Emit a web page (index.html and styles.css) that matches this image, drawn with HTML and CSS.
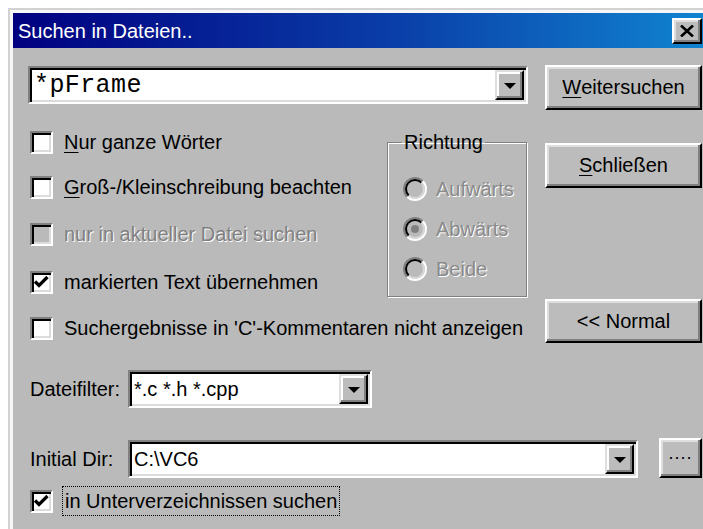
FILE: index.html
```html
<!DOCTYPE html>
<html lang="de">
<head>
<meta charset="utf-8">
<title>Suchen in Dateien..</title>
<link rel="stylesheet" href="styles.css">
</head>
<body>
<div class="window">
  <div class="titlebar">
    <span class="title">Suchen in Dateien..</span>
    <span class="close-btn">
      <svg width="14" height="12" viewBox="0 0 14 12"><path d="M1 0.5 L13 11.5 M13 0.5 L1 11.5" stroke="#000" stroke-width="2.6" fill="none"/></svg>
    </span>
  </div>
  <div class="client">
    <div class="main-grid">
      <div class="combo combo-search">
        <span class="combo-text mono">*pFrame</span>
        <span class="drop-btn"><span class="arrow"></span></span>
      </div>

      <div class="actions">
        <div class="btn btn-find"><u>W</u>eitersuchen</div>
        <div class="btn btn-close"><u>S</u>chließen</div>
        <div class="btn btn-normal">&lt;&lt; Normal</div>
      </div>

      <div class="check-row row-a">
        <span class="box"></span>
        <span class="label"><u>N</u>ur ganze Wörter</span>
      </div>
      <div class="check-row row-b">
        <span class="box"></span>
        <span class="label"><u>G</u>roß-/Kleinschreibung beachten</span>
      </div>
      <div class="check-row row-c disabled">
        <span class="box"></span>
        <span class="label">nur in aktueller Datei suchen</span>
      </div>
      <div class="check-row row-d">
        <span class="box checked"><svg width="19" height="19" viewBox="0 0 19 19"><path d="M3 8.5 L7 12.5 L15.5 4" stroke="#000" stroke-width="3.2" fill="none"/></svg></span>
        <span class="label">markierten Text übernehmen</span>
      </div>
      <div class="check-row row-e">
        <span class="box"></span>
        <span class="label">Suchergebnisse in 'C'-Kommentaren nicht anzeigen</span>
      </div>

      <fieldset class="direction">
        <legend>Richtung</legend>
        <div class="radio-row"><span class="radio"></span><span class="radio-label">Aufwärts</span></div>
        <div class="radio-row"><span class="radio selected"></span><span class="radio-label">Abwärts</span></div>
        <div class="radio-row"><span class="radio"></span><span class="radio-label">Beide</span></div>
      </fieldset>
    </div>

    <div class="field-row filter-row">
      <span class="field-label">Dateifilter:</span>
      <div class="combo combo-filter">
        <span class="combo-text">*.c *.h *.cpp</span>
        <span class="drop-btn"><span class="arrow"></span></span>
      </div>
    </div>

    <div class="field-row dir-row">
      <span class="field-label">Initial Dir:</span>
      <div class="combo combo-dir">
        <span class="combo-text">C:\VC6</span>
        <span class="drop-btn"><span class="arrow"></span></span>
      </div>
      <div class="btn btn-browse">....</div>
    </div>

    <div class="check-row sub-row">
      <span class="box checked"><svg width="19" height="19" viewBox="0 0 19 19"><path d="M3 8.5 L7 12.5 L15.5 4" stroke="#000" stroke-width="3.2" fill="none"/></svg></span>
      <span class="label focus">in Unterverzeichnissen suchen</span>
    </div>
  </div>
</div>
</body>
</html>
```

FILE: styles.css
```css
html, body {
  margin: 0;
  padding: 0;
  background: #ffffff;
  overflow: hidden;
}

body {
  font-family: "Liberation Sans", Arial, sans-serif;
  font-size: 20px;
  color: #000;
}

/* Dialog frame */
.window {
  margin: 8px 0 0 8px;
  width: 698px;
  height: 530px;
  box-sizing: border-box;
  border-top: 2px solid #d2d2d2;
  border-left: 2px solid #d2d2d2;
  padding: 3px 0 0 3px;
  background: #f6f6f6;
  overflow: hidden;
}

.titlebar {
  height: 35px;
  display: flex;
  align-items: center;
  justify-content: space-between;
  padding-left: 5px;
  padding-right: 4px;
  background: linear-gradient(to right, #000080 0%, #0a3ea8 55%, #1084d0 100%);
}

.title {
  color: #fff;
  font-size: 20px;
  line-height: 22px;
}

.close-btn {
  width: 30px;
  height: 26px;
  box-sizing: border-box;
  display: flex;
  align-items: center;
  justify-content: center;
  background: #bcbcbc;
  border: 2px solid;
  border-color: #ffffff #000000 #000000 #ffffff;
  box-shadow: inset -2px -2px #808080, inset 2px 2px #dedede;
}

.client {
  background: #bababa;
  height: 100%;
  padding: 17px 0 0 15px;
  box-sizing: border-box;
}

/* Upper area: search combo, options, direction group, action buttons */
.main-grid {
  display: grid;
  grid-template-columns: 359px 140px 175px;
  grid-template-rows: 54px 46px 45px 48px 49px 43px;
  width: 674px;
}

.combo {
  display: flex;
  align-items: stretch;
  box-sizing: border-box;
  height: 38px;
  padding: 2px;
  background: #fff;
  border: 2px solid;
  border-color: #808080 #ffffff #ffffff #808080;
  box-shadow: inset 2px 2px #000000, inset -2px -2px #dcdcdc;
}

.combo-text {
  flex: 1;
  display: flex;
  align-items: center;
  padding-left: 2px;
  white-space: nowrap;
  overflow: hidden;
}

.mono {
  font-family: "Liberation Mono", "Courier New", monospace;
  font-size: 25px;
  letter-spacing: 0.4px;
}

.drop-btn {
  width: 29px;
  box-sizing: border-box;
  display: flex;
  align-items: center;
  justify-content: center;
  background: #bcbcbc;
  border: 2px solid;
  border-color: #dedede #000000 #000000 #dedede;
  box-shadow: inset -2px -2px #808080, inset 2px 2px #ffffff;
}

.arrow {
  width: 0;
  height: 0;
  border-left: 6px solid transparent;
  border-right: 6px solid transparent;
  border-top: 6px solid #000;
  margin-top: 1px;
}

.combo-search {
  grid-column: 1 / 3;
  grid-row: 1;
  margin-top: 1px;
  width: 500px;
}

.actions {
  grid-column: 3;
  grid-row: 1 / 7;
  display: flex;
  flex-direction: column;
  padding-left: 18px;
}

.btn {
  box-sizing: border-box;
  display: flex;
  align-items: center;
  justify-content: center;
  background: #bcbcbc;
  border: 2px solid;
  border-color: #ffffff #000000 #000000 #ffffff;
  box-shadow: inset -2px -2px #808080, inset 2px 2px #dedede;
  white-space: nowrap;
}

.btn u, .label u {
  text-decoration-thickness: 1px;
  text-underline-offset: 3px;
}

.btn-find { height: 45px; }
.btn-close { height: 45px; margin-top: 33px; }
.btn-normal { height: 44px; margin-top: 111px; }

/* Checkboxes */
.check-row {
  display: flex;
  align-items: center;
  padding-left: 2px;
  white-space: nowrap;
}

.row-a { grid-column: 1; grid-row: 2; }
.row-b { grid-column: 1; grid-row: 3; }
.row-c { grid-column: 1; grid-row: 4; }
.row-d { grid-column: 1; grid-row: 5; }
.row-e { grid-column: 1 / 3; grid-row: 6; }

.box {
  width: 23px;
  height: 23px;
  flex: none;
  box-sizing: border-box;
  background: #fff;
  border: 2px solid;
  border-color: #808080 #ffffff #ffffff #808080;
  box-shadow: inset 2px 2px #000000, inset -2px -2px #dcdcdc;
  display: flex;
  align-items: center;
  justify-content: center;
  margin-right: 11px;
}

.disabled .box {
  background: #bababa;
}

.disabled .label {
  color: #808080;
  text-shadow: 1px 1px 0 #ffffff;
}

/* Direction group */
.direction {
  grid-column: 2;
  grid-row: 2 / 6;
  align-self: start;
  margin: 13px 0 0 0;
  height: 165px;
  box-sizing: border-box;
  padding: 0 0 0 14px;
  border: 1px solid #808080;
  box-shadow: 1px 1px 0 #ffffff, inset 1px 1px 0 #ffffff;
  min-width: 0;
}

.direction legend {
  padding: 0 2px;
  line-height: 20px;
  font-size: 20px;
}

.radio-row {
  display: flex;
  align-items: center;
  height: 40px;
  margin-left: 1px;
}

.radio-row:first-of-type {
  margin-top: 17px;
}

.radio {
  position: relative;
  width: 24px;
  height: 24px;
  flex: none;
  box-sizing: border-box;
  border-radius: 50%;
  border: 2px solid;
  border-color: #808080 #ffffff #ffffff #808080;
  margin-right: 9px;
}

.radio::before {
  content: "";
  position: absolute;
  inset: 0;
  border-radius: 50%;
  border: 2px solid;
  border-color: #000000 #d8d8d8 #d8d8d8 #000000;
  background: #bababa;
}

.radio.selected::after {
  content: "";
  position: absolute;
  left: 6px;
  top: 6px;
  width: 8px;
  height: 8px;
  border-radius: 50%;
  background: #808080;
}

.radio-label {
  color: #8a8a8a;
  text-shadow: 1px 1px 0 #ffffff;
}

/* Filter and directory rows */
.field-row {
  display: flex;
  align-items: center;
  height: 38px;
}

.field-label {
  width: 100px;
  flex: none;
  padding-left: 2px;
  box-sizing: border-box;
}

.filter-row { margin-top: 20px; }
.dir-row { margin-top: 32px; }

.combo-filter { width: 244px; }
.combo-dir { width: 510px; }

.btn-browse {
  width: 43px;
  height: 40px;
  margin-left: 21px;
  margin-top: -3px;
  font-size: 18px;
  letter-spacing: 1px;
  align-items: flex-end;
  padding-bottom: 12px;
}

.sub-row {
  margin-top: 8px;
  height: 30px;
}

.sub-row .box {
  margin-right: 9px;
}

.focus {
  box-sizing: border-box;
  height: 30px;
  display: flex;
  align-items: center;
  padding: 0 2px 0 2px;
  border: 1px dotted #000;
}
```
